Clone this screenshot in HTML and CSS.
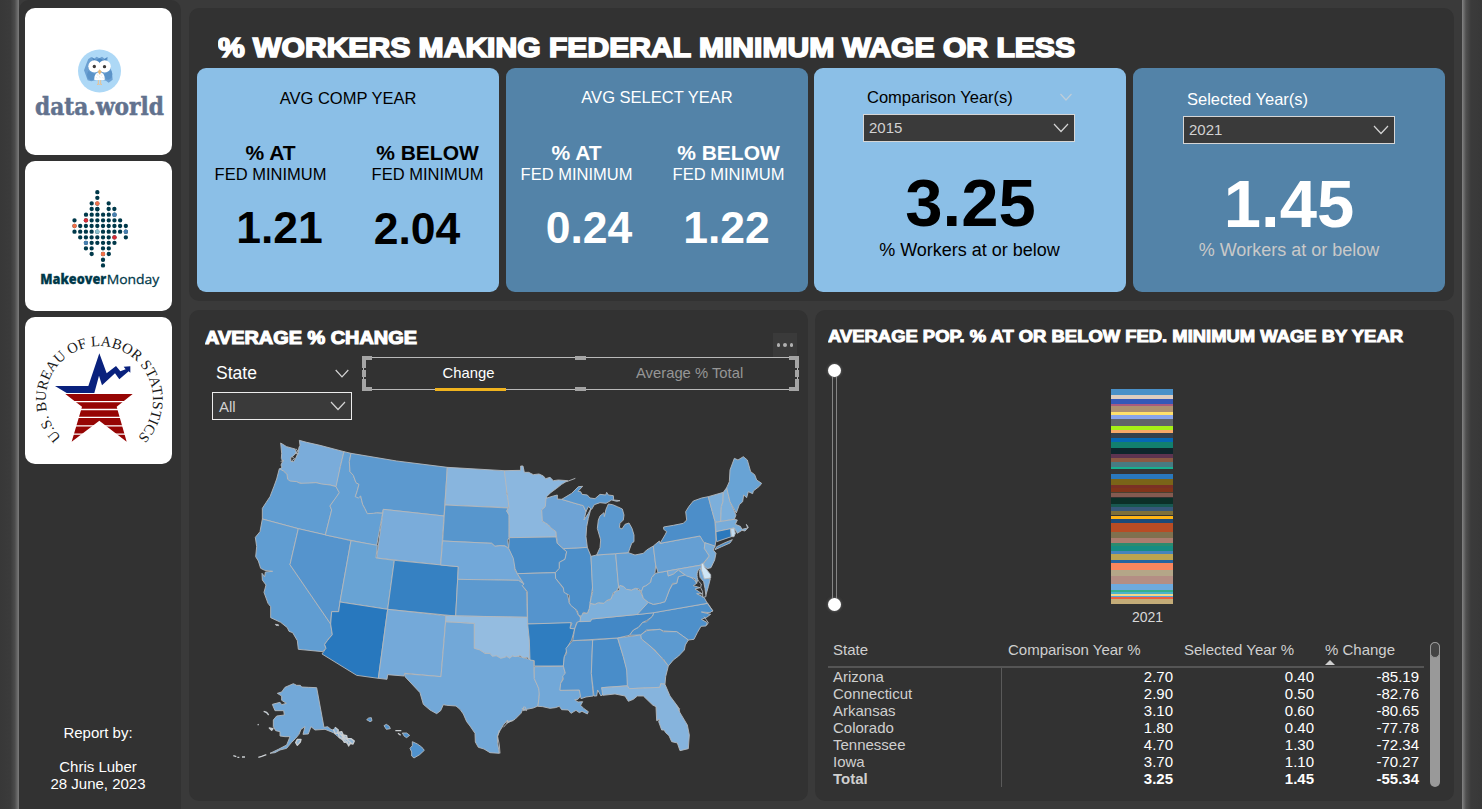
FILE: index.html
```html
<!DOCTYPE html>
<html lang="en">
<head>
<meta charset="utf-8">
<title>Federal Minimum Wage Report</title>
<link rel="stylesheet" href="styles.css">
</head>
<body>
<div class="page">
  <div class="edge edge-left"></div>
  <aside class="sidebar">
    <div class="tile tile-owl">
      <svg viewBox="75 24 441 441" width="147" height="147">
        <circle cx="298.500" cy="213" r="64.500" fill="#add8f6"/>
        <path d="M274 171l8 5 8-6 8 5 8-5 8 6 9-5 -1 12 6 12 8 22 2 22-12 9-8-6-20-4-24 6-11-3-11-30 8-22 5-12z" fill="#6ba0d2"/>
        <path d="M276 172l12 8 11-5 11 5 12-8-6 14-17 12-17-12z" fill="#4c86bf"/>
        <path d="M265 213l-4 10 2 12 9 6 8-1 6-17zM333 211l4 10-2 12-9 6-8-1-6-15z" fill="#5b93c8"/>
        <path d="M283 240c-1-15 6-23 16-23s16 9 15 23z" fill="#fff"/>
        <path d="M292 223l2 4M303 223l2 4M298 229l2 4M289 232l2 3M308 232l2 3" stroke="#d0d6db" stroke-width="2"/>
        <circle cx="283.500" cy="199" r="18.500" fill="#fff"/><circle cx="314" cy="199" r="18.500" fill="#fff"/>
        <circle cx="283" cy="199.500" r="5" fill="#3e3b3a"/><circle cx="313.500" cy="200" r="5" fill="#3e3b3a"/>
        <path d="M299 208l6 7-6 9-6-9z" fill="#e9b878"/>
        <path d="M295 240v13m-4 2l4-4 3 4M302 240v13m-3 2l3-4 4 4" stroke="#e7c294" stroke-width="3" fill="none"/>
        <text class="dw" x="105" y="344" textLength="387" lengthAdjust="spacingAndGlyphs">data.world</text>
      </svg>
    </div>
    <div class="tile tile-mm">
      <svg viewBox="75 483 441 450" width="147" height="150">
        <g class="dots">
          <path d="M292 576.500V629M309 745V798"/>
          <path d="M275 610H275.100M326 610H326.100M275 627H293M326 627H344M258 644H345M223.500 661H223.600M257.800 661H362M223.500 678H379M223.500 695H379M240.600 712H345M377.500 712H377.600M257.800 728.500H345M257.800 745H276M326.400 745H326.500M275 762H275.100M326.400 762H326.500"/>
        </g>
        <g fill="#f0714a"><circle cx="292" cy="610.500" r="6.500"/><circle cx="223.500" cy="678" r="6.500"/><circle cx="309" cy="762" r="6.500"/></g>
        <g fill="#d62b36"><circle cx="257.800" cy="661" r="6.500"/><circle cx="343.500" cy="712" r="6.500"/></g>
        <g fill="#487fb0"><circle cx="343.500" cy="644" r="6.500"/><circle cx="377.500" cy="695" r="6.500"/><circle cx="257.800" cy="728.500" r="6.500"/></g>
        <circle cx="292" cy="695" r="6.500" fill="#8bc1cf"/>
        <text class="mm mm-bold" x="121" y="852" textLength="198" lengthAdjust="spacingAndGlyphs">Makeover</text>
        <text class="mm" x="320" y="852" textLength="158" lengthAdjust="spacingAndGlyphs">Monday</text>
      </svg>
    </div>
    <div class="tile tile-bls">
      <svg viewBox="75 21 441 441" width="147" height="147">
        <path id="ring" d="M184 383A161 161 0 1 1 412 383" fill="none"/>
        <text class="ring-text"><textPath href="#ring" textLength="757" startOffset="0">U.S. BUREAU OF LABOR STATISTICS</textPath></text>
        <path d="M165 228H265L298 130 320 190 348 168 361 184 377 178 371 170 391 169V188L386 184 358 208 345 190 306 226 297 197 283 249H200Z" fill="#09217d"/>
        <path d="M196 252H398L350 290 380 395 298 332 215 395 246 290Z" fill="#960504"/>
        <path d="M215 275H385M235 298.500H365M225 322H375M210 347.500H385M205 372.500H390" stroke="#fff" stroke-width="4"/>
      </svg>
    </div>
    <div class="byline"><p>Report by:</p><p>&nbsp;</p><p>Chris Luber</p><p>28 June, 2023</p></div>
  </aside>

  <main class="content">
    <section class="panel summary">
      <svg class="headline" width="870" height="40" viewBox="0 0 870 40"><text class="head head-xl" x="0" y="29.500" textLength="857" lengthAdjust="spacingAndGlyphs">% WORKERS MAKING FEDERAL MINIMUM WAGE OR LESS</text></svg>
      <div class="cards">
        <div class="card light avg">
          <div class="card-title">AVG COMP YEAR</div>
          <div class="stats">
            <div class="stat"><b>% AT</b><span>FED MINIMUM</span><strong class="n-a">1.21</strong></div>
            <div class="stat"><b>% BELOW</b><span>FED MINIMUM</span><strong class="n-b">2.04</strong></div>
          </div>
        </div>
        <div class="card dark avg avg-select">
          <div class="card-title">AVG SELECT YEAR</div>
          <div class="stats">
            <div class="stat"><b>% AT</b><span>FED MINIMUM</span><strong class="n-c">0.24</strong></div>
            <div class="stat"><b>% BELOW</b><span>FED MINIMUM</span><strong class="n-d">1.22</strong></div>
          </div>
        </div>
        <div class="card light pick">
          <div class="pick-label"><span>Comparison Year(s)</span><svg class="chev" width="12" height="8" viewBox="0 0 12 8"><path d="M.5 1L6 7 11.500 1"/></svg></div>
          <div class="select"><span>2015</span><svg class="chev" width="16" height="10" viewBox="0 0 16 10"><path d="M1 1L8 8.500 15 1"/></svg></div>
          <div class="big">3.25</div>
          <div class="sub">% Workers at or below</div>
        </div>
        <div class="card dark pick pick-select">
          <div class="pick-label"><span>Selected Year(s)</span></div>
          <div class="select"><span>2021</span><svg class="chev" width="16" height="10" viewBox="0 0 16 10"><path d="M1 1L8 8.500 15 1"/></svg></div>
          <div class="big">1.45</div>
          <div class="sub">% Workers at or below</div>
        </div>
      </div>
    </section>

    <div class="lower">
      <section class="panel change">
        <div class="change-top">
          <svg width="240" height="30" viewBox="0 0 240 30"><text class="head" x="0" y="18.500" textLength="212" lengthAdjust="spacingAndGlyphs">AVERAGE % CHANGE</text></svg>
          <div class="more"><i></i><i></i><i></i></div>
        </div>
        <div class="controls">
          <div class="slicer">
            <div class="slicer-label"><span>State</span><svg class="chev" width="14" height="9" viewBox="0 0 14 9"><path d="M.7 1L7 7.800 13.300 1"/></svg></div>
            <div class="select"><span>All</span><svg class="chev" width="16" height="10" viewBox="0 0 16 10"><path d="M1 1L8 8.500 15 1"/></svg></div>
          </div>
          <div class="tabs">
            <div class="tab active"><span>Change</span></div><div class="tab">Average % Total</div>
            <svg class="handles" width="437" height="35" viewBox="0 0 437 35"><path d="M2 12V2H10M427 2H435V12M435 23V33H427M10 33H2V23M213 2H224M213 33H224M2 14V21M435 14V21"/></svg>
          </div>
        </div>
        <svg class="map" width="602" height="372" viewBox="197 425 602 372">
          <g transform="translate(240 430) scale(.33333)">
            <path fill="#7aacda" d="M178 31L200 37 240 46 312 65 301 110 290 170 270 165 245 163 228 158 210 160 190 162 170 156 150 155 143 148 141 133 130 123 118 118 126 112 123 105 128 94 124 85 125 70 122 39 140 50 165 57 169 66 163 75 152 83 153 94 161 95 167 85 174 69 177 52 180 46Z"/>
            <path fill="none" d="M168 56L174 64 166 70 176 72M156 80L164 86 156 92M122 94L132 92"/>
            <path fill="#609dd2" d="M118 116L130 123 141 133 143 148 150 153 170 155 180 160 210 159 228 158 245 162 270 165 288 170 298 188 293 196 285 208 276 219 270 228 275 240 256 315 175 296 67 267 67 235 78 218 90 200 102 169 110 147Z"/>
            <path fill="#609dd2" d="M67 267L175 296 150 404 272 582 277 614 268 623 262 632 254 643 258 655 248 665 175 658 172 632 158 608 147 604 142 593 122 577 92 563 92 530 84 520 72 487 78 465 67 450 66 430 74 440 76 426 98 424 74 421 62 415 55 393 47 380 50 350 46 322 60 305Z"/>
            <path fill="#5594cd" d="M175 296L333 332 300 516 296 545 275 545 272 582 150 404Z"/>
            <path fill="#64a0d4" d="M312 65L333 70 328 95 330 125 340 136 348 158 357 163 352 182 346 200 362 198 368 223 375 236 382 250 400 248 428 249 410 347 256 315 275 240 270 228 298 188 288 170 301 110Z"/>
            <path fill="#5c99cf" d="M333 70L470 93 622 112 612 258 430 238 427 249 410 248 400 250 382 251 375 236 368 223 362 198 355 204 346 200 352 182 357 163 348 158 340 136 330 125 328 95Z"/>
            <path fill="#7aacda" d="M430 238L612 258 602 405 410 384Z"/>
            <path fill="#68a3d4" d="M333 332L412 346 408 384 463 391 443 538 300 516Z"/>
            <path fill="#3681c2" d="M463 391L655 410 647 558 443 538Z"/>
            <path fill="#2878be" d="M300 516L443 538 415 745 350 736 246 672 258 655 254 643 262 632 277 614 272 582 275 545 296 545Z"/>
            <path fill="#74a9d9" d="M443 538L618 557 603 740 494 730 492 738 443 734 441 748 415 745Z"/>
            <path fill="#88b5de" d="M622 112L793 122 799 155 800 190 806 212 806 233 615 225Z"/>
            <path fill="#5796cd" d="M615 225L804 234 800 243 808 255 807 322 803 332 806 354 795 348 780 347 765 349 755 340 608 333Z"/>
            <path fill="#72a8d9" d="M608 333L755 340 765 349 780 347 795 348 808 358 818 375 824 390 825 420 832 431 850 462 835 451 653 448 655 410 602 405Z"/>
            <path fill="#5c99cf" d="M653 448L835 451 852 462 847 467 860 485 862 562 647 558Z"/>
            <path fill="#72a8d8" d="M617 575L703 580 703 655 717 657 735 670 755 671 780 682 800 680 825 677 850 683 881 692 883 746 892 765 899 783 894 828 880 834 860 838 850 842 852 830 843 850 825 868 800 880 803 870 790 885 780 902 772 918 773 940 778 970 750 968 732 957 715 952 706 936 705 910 690 888 680 875 670 852 660 838 648 828 620 826 610 824 602 842 590 851 570 840 550 823 540 788 495 740 494 731 603 740Z"/>
            <path fill="#94bce0" d="M618 557L862 562 868 630 870 690 862 682 850 683 840 677 825 680 817 677 810 685 800 679 790 683 782 685 770 677 757 679 750 670 735 670 720 660 703 655 703 580 617 575Z"/>
            <path fill="#ccc" d="M106 583l9 1 1 3-8-1z"/>
          </g>
          <g transform="translate(500 440) scale(.33333)">
            <path fill="#8bb7df" d="M13 92L62 91 62 78 69 78 73 97 86 97 100 104 117 102 130 108 137 116 150 112 160 122 175 120 203 122 185 133 170 145 152 158 140 170 136 200 125 210 129 224 127 243 146 255 152 263 168 275 168 291 28 293 27 225 20 213 27 202 20 150Z"/>
            <path fill="#478bc7" d="M28 293L168 291 172 310 185 322 200 335 195 358 178 367 178 385 166 398 52 401 45 385 40 355 26 325Z"/>
            <path fill="#5594cd" d="M52 401L166 398 167 415 190 445 203 465 208 490 228 510 235 525 243 535 240 545 230 548 224 567 210 565 216 549 83 552 82 455 67 437 72 432Z"/>
            <path fill="#2f7dc0" d="M83 552L213 548 210 565 224 567 215 600 205 616 200 632 193 650 190 678 103 678 103 662 90 660 88 600Z"/>
            <path fill="#72a8d8" d="M103 680L190 679 196 700 182 730 180 751 238 750 243 766 234 778 224 779 234 786 248 785 242 796 252 806 265 815 262 822 246 814 238 818 228 811 213 820 205 810 185 809 178 799 166 803 150 805 128 800 114 799 118 765 116 745 103 716Z"/>
            <path fill="#5594cd" d="M218 602L278 600 274 700 280 768 258 771 243 776 238 750 180 751 182 730 190 718 188 708 196 700 190 678 193 650 200 640 198 625Z"/>
            <path fill="#498dc9" d="M278 600L353 594 370 650 382 690 383 737 305 743 311 760 303 768 293 750 290 768 282 768 274 700Z"/>
            <path fill="#4e90ca" d="M460 518L622 490 638 512 630 518 604 516 632 523 620 532 604 538 622 548 618 558 603 559 592 578 582 598 565 600 530 575 490 573 480 568 440 570 422 585 388 586 400 570 415 562 428 547 440 545 458 528Z"/>
            <path fill="#4388c6" d="M232 546L275 537 415 523 462 518 456 530 440 542 428 547 415 562 400 570 388 586 353 594 218 602 224 567Z"/>
            <path fill="#7eb0db" d="M240 545L243 520 262 520 268 505 270 490 285 493 295 488 310 490 320 482 330 480 345 455 358 450 358 436 370 439 380 448 395 450 406 445 420 452 430 475 445 487 415 523 275 537 272 544Z"/>
            <path fill="#4c8fca" d="M190 326L262 322 273 349 278 440 270 490 268 505 262 520 250 517 244 529 235 525 232 512 212 496 208 488 208 466 192 457 190 443 167 415 166 398 178 385 178 367 195 358 200 335Z"/>
            <path fill="#68a3d4" d="M273 349L290 345 347 341 356 440 350 453 340 458 333 477 322 480 312 490 295 488 285 493 270 490 278 455Z"/>
            <path fill="#659fd3" d="M347 341L385 338 405 345 430 340 440 330 460 318 467 375 465 400 455 413 452 427 437 438 430 440 425 455 415 446 406 445 395 450 380 448 370 439 360 436 356 445Z"/>
            <path fill="#6ea3d5" d="M138 175L160 168 172 165 172 177 185 178 225 190 250 197 258 215 252 240 265 220 273 205 265 235 260 260 258 290 262 322 190 326 172 310 168 275 152 263 146 255 127 243 125 210 136 200Z"/>
            <path fill="#5a98cf" d="M185 178L215 160 235 140 248 139 234 154 242 155 246 163 262 165 270 174 285 176 300 163 317 165 320 157 325 165 340 167 341 180 360 182 350 184 335 180 318 190 300 188 283 194 275 208 265 200 258 215 250 197 225 190Z"/>
            <path fill="#5a98cf" d="M325 192L338 194 352 200 367 207 372 225 370 240 360 250 358 263 366 267 375 253 387 249 396 265 402 285 402 305 395 310 385 338 347 341 290 345 300 323 302 300 292 265 295 240 300 228 312 218 313 230 318 208Z"/>
            <path fill="#5192cc" d="M411 524L445 487 460 493 478 490 495 485 508 450 518 433 530 430 535 410 548 400 570 410 585 421 590 430 580 437 600 443 585 447 607 462 590 461 612 472 622 490 462 518Z"/>
            <path fill="#609dd2" d="M467 400L474 398 502 393 505 408 520 402 535 390 555 405 535 410 530 430 518 430 508 450 495 485 478 490 460 493 445 487 430 475 424 455 430 440 437 438 452 427 455 413Z"/>
            <path fill="#659fd3" d="M460 318L478 303 480 310 600 288 615 308 613 325 628 348 605 375 474 398 467 375Z"/>
            <path fill="#4c8ec9" d="M480 310L495 285 500 275 491 268 491 261 520 256 550 250 560 240 557 215 567 199 580 183 605 174 625 170 630 190 637 215 645 245 648 300 645 320 612 308 600 288Z"/>
            <path fill="#4c8ec9" d="M645 329L650 320 675 308 697 299 690 309 665 320Z"/>
            <path fill="#78acd9" d="M615 308L645 318 640 330 648 340 644 360 633 383 622 386 608 375 628 348 613 325Z"/>
            <path fill="#7cafdb" d="M625 170L670 157 669 185 664 200 662 244 646 247 637 215Z"/>
            <path fill="#7cafdb" d="M670 157L680 143 690 185 708 225 703 238 662 244 664 200 669 185Z"/>
            <path fill="#68a3d5" d="M680 143L688 125 690 90 703 55 714 60 730 50 742 60 752 95 764 104 770 120 785 130 778 139 760 153 758 161 745 155 740 173 731 165 728 185 718 194 709 219 690 185Z"/>
            <path fill="#78acd9" d="M646 247L703 238 712 240 706 253 721 259 726 268 743 264 739 253 745 262 735 273 726 271 712 280 703 264 648 275Z"/>
            <path fill="#2b79bd" d="M648 275L692 266 694 290 650 305Z"/>
            <path fill="#c3dcf0" d="M692 266L702 264 706 280 702 290 694 290Z"/>
            <path fill="#74a9d9" d="M502 393L605 375 613 415 631 416 625 440 617 468 610 440 595 415 590 430 585 416 560 408 535 390 520 402 505 408Z"/>
            <path fill="#333" stroke="none" d="M602 384C590 388 588 410 596 424L604 432 602 443 608 455 608 472 618 470 615 445 611 425 600 412 598 394Z"/>
            <path fill="#cfe6f7" d="M604 372L610 369 613 380 632 404 632 414 613 417 605 392Z"/>
            <path fill="#5c9ad0" d="M422 585L440 572 480 568 490 575 530 575 565 600 556 615 553 630 536 648 520 660 505 678 490 657 480 648 465 630 440 610 422 595Z"/>
            <path fill="#72a8d9" d="M353 594L422 585 424 597 450 618 480 648 505 678 497 710 495 733 482 731 480 742 388 746 382 737 380 690 370 650Z"/>
            <path fill="#86b4dd" d="M305 743L382 738 388 746 480 742 482 731 495 733 510 768 533 799 540 818 562 855 568 885 565 926 540 932 532 909 515 905 507 887 497 878 492 870 485 870 476 845 479 838 470 842 468 800 458 795 430 768 412 768 400 778 385 784 375 768 345 762 308 766Z"/>
            <path fill="none" d="M528 797L539 806 536 813M200 125L226 115M20 845L40 842M65 805L80 812 75 800"/>
            <path fill="none" d="M622 488L638 512 636 516M612 530L625 548 620 556"/>
          </g>
          <g transform="translate(225 670) scale(.33333)">
            <path fill="#72a8d8" d="M205 41L215 46 226 46 230 51 250 52 275 53 297 172 308 170 318 178 330 182 345 190 385 215 372 225 345 205 325 188 300 178 270 180 258 170 250 192 234 193 240 170 228 178 222 193 212 205 200 217 185 235 165 240 150 248 135 250 160 238 185 225 195 200 180 200 165 198 165 185 152 182 145 170 145 150 155 138 178 135 176 122 150 122 142 103 165 97 170 104 184 100 170 91 170 78 157 70 170 66 180 52Z"/>
            <path class="isles" d="M330 172L340 180 338 187 350 185 355 195 365 197 366 205 378 206 388 213 384 222 375 220 371 228 366 215 358 217 352 205 343 203 340 190 330 190 325 178M350 193L380 221M343 188L362 212"/>
            <path class="isles" d="M212 218L217 208 228 208 226 216 217 226ZM116 124L125 127 131 135M25 257L34 260M37 262L43 262M51 261L60 261M100 262L110 259 124 254M98 163L101 165M133 174L144 176 140 181Z"/>
            <path fill="#5092cd" d="M425 149L431 144 439 143 441 152 435 155ZM477 167L484 163 493 169 496 176 484 178ZM532 189L545 189 554 196 545 203 538 199Z"/>
            <path class="isles" d="M511 182L529 182M519 190L527 196"/>
            <path fill="#5092cd" d="M562 215L577 222 590 231 598 241 584 254 567 264 560 258 560 246 555 235 562 227Z"/>
            <path fill="none" d="M823 180L818 200 823 225 825 250M835 172L848 158 858 152"/>
          </g>
        </svg>
      </section>

      <section class="panel years">
        <svg width="600" height="30" viewBox="0 0 600 30"><text class="head head-sm" x="0" y="18.500" textLength="575" lengthAdjust="spacingAndGlyphs">AVERAGE POP. % AT OR BELOW FED. MINIMUM WAGE BY YEAR</text></svg>
        <div class="chart">
          <div class="slider"><i class="thumb"></i><i class="track"></i><i class="thumb"></i></div>
          <div class="bar-col">
            <svg width="62" height="216" viewBox="0 26 186 648" preserveAspectRatio="none" shape-rendering="crispEdges">
              <path fill="#4a90c8" d="M0 27h186v18H0z"/><path fill="#dfcdbf" d="M0 44h186v13H0z"/><path fill="#3558b8" d="M0 57h186v14H0z"/><path fill="#a85a80" d="M0 71h186v5H0z"/><path fill="#ae9070" d="M0 76h186v19H0z"/><path fill="#ffe06a" d="M0 95h186v10H0z"/><path fill="#88a4ea" d="M0 105h186v12H0z"/><path fill="#606468" d="M0 117h186v21H0z"/><path fill="#a6f016" d="M0 138h186v12H0z"/><path fill="#f8a868" d="M0 150h186v8H0z"/><path fill="#36404a" d="M0 158h186v16H0z"/><path fill="#0668b4" d="M0 174h186v12H0z"/><path fill="#12806e" d="M0 186h186v18H0z"/><path fill="#0e262c" d="M0 204h186v18H0z"/><path fill="#5c3450" d="M0 222h186v12H0z"/><path fill="#8a5a44" d="M0 234h186v12H0z"/><path fill="#487a82" d="M0 246h186v15H0z"/><path fill="#18b090" d="M0 261h186v6H0z"/><path fill="#353535" d="M0 267h186v14H0z"/><path fill="#2a78bc" d="M0 281h186v15H0z"/><path fill="#7a6418" d="M0 296h186v19H0z"/><path fill="#7a3024" d="M0 315h186v9H0z"/><path fill="#80341a" d="M0 324h186v11H0z"/><path fill="#4a4030" d="M0 335h186v4H0z"/><path fill="#845a50" d="M0 339h186v12H0z"/><path fill="#0c3028" d="M0 352h186v20H0z"/><path fill="#185850" d="M0 372h186v9H0z"/><path fill="#36587a" d="M0 381h186v12H0z"/><path fill="#7e7038" d="M0 393h186v12H0z"/><path fill="#fdb414" d="M0 406h186v11H0z"/><path fill="#1c4a78" d="M0 417h186v12H0z"/><path fill="#b84c24" d="M0 429h186v27H0z"/><path fill="#80704e" d="M0 456h186v18H0z"/><path fill="#ac7c6e" d="M0 474h186v13H0z"/><path fill="#2c8a6e" d="M0 487h186v10H0z"/><path fill="#168c82" d="M0 497h186v16H0z"/><path fill="#4684bc" d="M0 513h186v9H0z"/><path fill="#bca450" d="M0 522h186v18H0z"/><path fill="#2464a0" d="M0 540h186v9H0z"/><path fill="#f8865e" d="M0 549h186v19H0z"/><path fill="#b4a688" d="M0 568h186v20H0z"/><path fill="#b48e84" d="M0 588h186v22H0z"/><path fill="#6eaade" d="M0 610h186v20H0z"/><path fill="#38b08a" d="M0 630h186v6H0z"/><path fill="#4ab4cc" d="M0 636h186v6H0z"/><path fill="#f0d88c" d="M0 642h186v6H0z"/><path fill="#58a0dc" d="M0 648h186v3H0z"/><path fill="#ec6040" d="M0 651h186v6H0z"/><path fill="#c4ac78" d="M0 657h186v15H0z"/>
            </svg>
            <div class="axis">2021</div>
          </div>
        </div>
        <div class="table-wrap">
          <div class="table">
            <div class="tr th"><span>State</span><span>Comparison Year %</span><span>Selected Year %</span><span class="sorted">% Change</span></div>
            <div class="tbody">
              <div class="tr"><span>Arizona</span><span>2.70</span><span>0.40</span><span>-85.19</span></div>
              <div class="tr"><span>Connecticut</span><span>2.90</span><span>0.50</span><span>-82.76</span></div>
              <div class="tr"><span>Arkansas</span><span>3.10</span><span>0.60</span><span>-80.65</span></div>
              <div class="tr"><span>Colorado</span><span>1.80</span><span>0.40</span><span>-77.78</span></div>
              <div class="tr"><span>Tennessee</span><span>4.70</span><span>1.30</span><span>-72.34</span></div>
              <div class="tr"><span>Iowa</span><span>3.70</span><span>1.10</span><span>-70.27</span></div>
              <div class="tr total"><span>Total</span><span>3.25</span><span>1.45</span><span>-55.34</span></div>
            </div>
          </div>
          <div class="scroll"><i></i></div>
        </div>
      </section>
    </div>
  </main>
  <div class="edge edge-right"></div>
</div>
</body>
</html>
```
FILE: styles.css
```css
* { box-sizing: border-box; }
body { margin: 0; background: #3a3a3a; font-family: "Liberation Sans", Arial, sans-serif; color: #fff; }
svg { display: block; }
p { margin: 0; }
.page { display: flex; width: 1482px; height: 809px; overflow: hidden; }
.edge-left { width: 19px; background: linear-gradient(90deg, #383838 0, #3b3b3b 55%, #4c4c4c 78%, #7c7c7c 100%); }
.edge-right { width: 20px; background: linear-gradient(90deg, #848484 0, #505050 20%, #3b3b3b 45%, #383838 100%); }

.sidebar { width: 162px; height: 809px; background: #323232; border-radius: 10px 10px 0 0; padding: 8px 0 0 6px; display: flex; flex-direction: column; }
.tile { width: 147px; background: #fff; border-radius: 10px; flex: none; }
.tile-owl { height: 147px; }
.tile-mm { height: 150px; margin-top: 6px; }
.tile-bls { height: 147px; margin-top: 6px; }
.byline { margin-top: 260px; width: 146px; text-align: center; font-size: 15px; line-height: 17px; }
.dw { font: bold 73px "DejaVu Serif Condensed", "DejaVu Serif", serif; font-stretch: condensed; fill: #62728e; stroke: #62728e; stroke-width: 1.500px; }
.mm { font: 40px "Open Sans", sans-serif; fill: #00394a; stroke: #00394a; stroke-width: .8px; }
.mm-bold { font-weight: 800; }
.dots path { fill: none; stroke: #00394a; stroke-width: 13px; stroke-linecap: round; stroke-dasharray: 0 17.110px; }
.ring-text { font: 44px "Liberation Serif", serif; fill: #1a1a1a; }

.content { width: 1281px; padding: 8px 8px 0; display: flex; flex-direction: column; gap: 9px; }
.panel { background: #323232; border-radius: 10px; }
.summary { height: 293px; padding: 18px 9px 0 8px; }
.headline { margin-left: 21px; height: 42px; }
.head { font: bold 17.500px "Liberation Sans", Arial, sans-serif; fill: #fff; stroke: #fff; stroke-width: 1.100px; }
.head-xl { font-size: 27.500px; stroke-width: 1.700px; }
.head-sm { font-size: 16.800px; stroke-width: 1px; }
.cards { display: grid; grid-template-columns: 302px 302px 312px 312px; column-gap: 7px; width: 1249px; height: 224px; }
.cards .pick { margin-left: -1px; margin-right: 1px; }
.cards .pick-select { margin-left: -1px; }
.card { border-radius: 9px; height: 224px; }
.light { background: #8bbfe7; color: #000; }
.dark { background: #5383a8; color: #fff; }
.avg { padding-top: 20px; font-size: 16.500px; }
.card-title { line-height: 20px; text-align: center; }
.avg-select { padding-top: 19px; }
.stats { display: flex; gap: 44px; padding: 35px 0 0 17px; }
.avg-select .stats { gap: 39px; padding: 36px 0 0 14px; }
.stat { width: 113px; display: flex; flex-direction: column; align-items: center; white-space: nowrap; }
.stat b { font-size: 21px; line-height: 20px; }
.stat span { line-height: 20px; margin-top: 1px; }
.stat strong { font-size: 44.500px; line-height: 50px; margin-top: 19px; }
.n-a { padding-left: 18px; }
.stat .n-b { padding-right: 21px; margin-top: 20px; }
.n-c { padding-left: 25px; }
.n-d { padding-right: 4px; }
.pick { padding: 19px 50px 0 49px; }
.pick-select { padding: 21px 50px 0; }
.pick-label { display: flex; justify-content: space-between; align-items: center; height: 20px; padding: 0 2px 0 4px; font-size: 16.500px; width: 212px; }
.light .pick-label .chev { opacity: .7; margin-right: 1px; }
.chev { fill: none; stroke: #d4d4d4; stroke-width: 1.200px; }
.select { display: flex; align-items: center; justify-content: space-between; width: 212px; height: 28px; margin-top: 8px; padding: 0 5px; border: 1.500px solid #d6d6d6; background: #3a3a3a; color: #d2d2d2; font-size: 15px; }
.pick .select { margin-top: 7px; line-height: 24px; align-items: center; }
.big { font-size: 67px; font-weight: bold; line-height: 70px; text-align: center; }
.sub { font-size: 18px; line-height: 20px; margin: 0 -20px; text-align: center; }
.light .big { margin-top: 26px; padding-left: 2px; }
.light .sub { margin-top: 2px; }
.dark .sub { color: #c9c9c9; margin-top: 1px; }
.dark .big { margin-top: 25px; }

.lower { display: flex; gap: 7px; }
.change { width: 619px; height: 491px; padding-left: 8px; }
.change-top { display: flex; justify-content: space-between; height: 47px; padding: 15px 11px 0 8px; }
.more { width: 24px; height: 24px; margin-top: 8px; background: #3a3a3a; display: flex; align-items: center; justify-content: center; gap: 3px; }
.more i { width: 3.500px; height: 3.500px; border-radius: 2px; background: #b0b0b0; }
.controls { display: flex; height: 68px; }
.slicer { width: 140px; margin-left: 15px; padding-top: 6px; }
.slicer-label { display: flex; justify-content: space-between; align-items: center; height: 20px; font-size: 17.500px; padding: 0 3px 0 4px; }
.slicer .select { width: 140px; margin-top: 9px; border-color: #ececec; padding-left: 6px; }
.tabs { position: relative; display: flex; width: 435px; height: 33px; margin-left: 11px; border: 1px solid #b9b9b9; font-size: 14.800px; line-height: 31px; padding: 0 0 0 71px; gap: 130px; color: #969696; }
.tab.active { width: 71px; padding-right: 4px; text-align: center; color: #fff; border-bottom: 3px solid #f0b31e; height: 33px; }
.handles { position: absolute; left: -2px; top: -2px; fill: none; stroke: #a4a4a4; stroke-width: 4px; pointer-events: none; }
.map path { stroke: #b4b9bd; stroke-width: 2.700px; stroke-linejoin: round; }
.map .isles { fill: #8fb4d4; stroke: #c9cdd0; stroke-width: 4px; }

.years { width: 639px; height: 491px; padding: 13px 0 0 13px; }
.chart { display: flex; height: 287px; }
.slider { display: flex; flex-direction: column; align-items: center; width: 13px; height: 247px; margin-top: 11px; }
.thumb { width: 13px; height: 13px; border-radius: 50%; background: #fff; flex: none; box-shadow: 0 0 3px #777; }
.track { flex: 1; width: 5px; border: solid #858585; border-width: 0 1.500px; }
.bar-col { margin: 36px 0 0 269.500px; width: 62px; }
.axis { margin: 3px -10px 0 2px; line-height: 18px; font-size: 14px; color: #d8d8d8; text-align: center; }
.table-wrap { display: flex; }
.table { width: 596px; font-size: 15px; }
.tr { display: grid; grid-template-columns: 173px 178px 141px 104px; line-height: 17px; height: 17px; text-align: right; }
.tr span { padding-right: 6px; }
.tr span:last-child { padding-right: 5px; }
.tr span:first-child { text-align: left; padding-left: 5px; color: #cfcfcf; }
.th { height: 28px; border-bottom: 2px solid #555; text-align: left; color: #cfcfcf; line-height: 20px; font-size: 15px; }
.th span { padding: 0 0 0 7px; white-space: nowrap; }
.th span:nth-child(3) { padding-left: 5px; }
.th .sorted { padding-left: 5px; }
.th .sorted::after { content: ""; display: block; width: 0; margin-left: 0; border: 5px solid transparent; border-top: 0; border-bottom-color: #cfcfcf; }
.tbody { background: linear-gradient(#5a5a5a, #5a5a5a) 173px 0 / 1px 100% no-repeat; }
.total { font-weight: bold; }
.scroll { width: 10px; height: 145px; margin: 2px 0 0 6px; border-radius: 5px; background: #999; }
.scroll i { display: block; width: 10px; height: 16px; border: 1px solid #999; border-radius: 5px; background: #444; }
```
